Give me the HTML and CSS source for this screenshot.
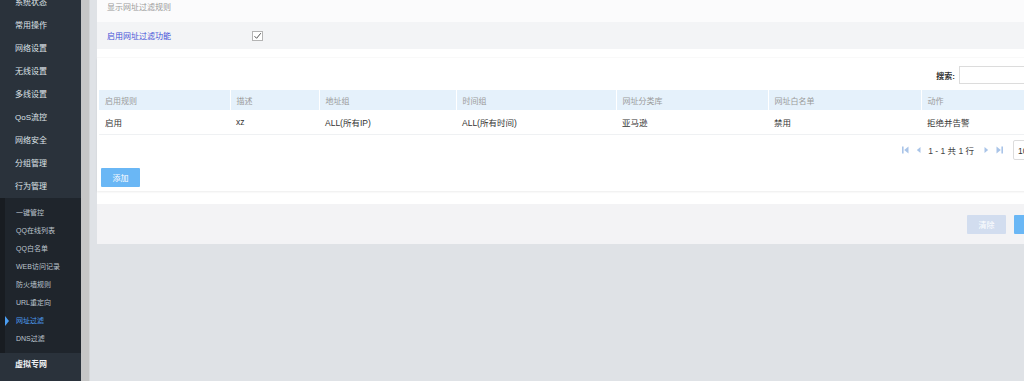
FILE: index.html
```html
<!DOCTYPE html>
<html lang="zh-CN">
<head>
	<meta charset="UTF-8">
	<meta name="viewport" content="width=device-width, initial-scale=1.0">
	<title>网址过滤</title>
	<link rel="stylesheet" href="styles.css">
</head>
<body>
<div class="layout">
	<aside class="sidebar">
		<ul class="menu menu-top">
			<li>系统状态</li>
			<li>常用操作</li>
			<li>网络设置</li>
			<li>无线设置</li>
			<li>多线设置</li>
			<li>QoS流控</li>
			<li>网络安全</li>
			<li>分组管理</li>
			<li>行为管理</li>
		</ul>
		<ul class="submenu">
			<li>一键管控</li>
			<li>QQ在线列表</li>
			<li>QQ白名单</li>
			<li>WEB访问记录</li>
			<li>防火墙规则</li>
			<li>URL重定向</li>
			<li class="active">网址过滤</li>
			<li>DNS过滤</li>
		</ul>
		<ul class="menu">
			<li class="strong">虚拟专网</li>
		</ul>
	</aside>
	<div class="scrollbar"></div>
	<main class="page">
		<div class="panel">
			<div class="panel-title">显示网址过滤规则</div>
			<div class="switch-row">
				<label class="switch-label">启用网址过滤功能</label>
				<span class="checkbox">
					<svg width="9" height="8" viewBox="0 0 9 8"><path d="M1.5 4.2 L3.6 6.3 L7.8 1.2" fill="none" stroke="#555" stroke-width="1"/></svg>
				</span>
			</div>
			<div class="panel-body">
				<div class="card">
					<div class="search-bar">
						<span class="search-label">搜索:</span>
						<input class="search-input" type="text">
					</div>
					<table class="grid">
						<colgroup>
							<col style="width:131px">
							<col style="width:89px">
							<col style="width:137px">
							<col style="width:160px">
							<col style="width:152px">
							<col style="width:153px">
							<col>
						</colgroup>
						<thead>
							<tr>
								<th>启用规则</th>
								<th>描述</th>
								<th>地址组</th>
								<th>时间组</th>
								<th>网址分类库</th>
								<th>网址白名单</th>
								<th>动作</th>
							</tr>
						</thead>
						<tbody>
							<tr>
								<td>启用</td>
								<td>xz</td>
								<td>ALL(所有IP)</td>
								<td>ALL(所有时间)</td>
								<td>亚马逊</td>
								<td>禁用</td>
								<td>拒绝并告警</td>
							</tr>
						</tbody>
					</table>
					<div class="pager">
						<svg class="pager-icon" width="7" height="8" viewBox="0 0 7 8"><rect x="0" y="0.5" width="1.6" height="7" fill="#a9c4e8"/><path d="M6.5 0.5 L2.2 4 L6.5 7.5 Z" fill="#a9c4e8"/></svg>
						<svg class="pager-icon" width="5" height="8" viewBox="0 0 5 8"><path d="M4.5 1 L0.8 4 L4.5 7 Z" fill="#a9c4e8"/></svg>
						<span class="pager-text">1 - 1 共 1 行</span>
						<svg class="pager-icon" width="5" height="8" viewBox="0 0 5 8"><path d="M0.5 1 L4.2 4 L0.5 7 Z" fill="#a9c4e8"/></svg>
						<svg class="pager-icon" width="7" height="8" viewBox="0 0 7 8"><path d="M0.5 0.5 L4.8 4 L0.5 7.5 Z" fill="#a9c4e8"/><rect x="5.4" y="0.5" width="1.6" height="7" fill="#a9c4e8"/></svg>
						<span class="page-size">10</span>
					</div>
					<div class="card-actions">
						<button class="btn btn-primary">添加</button>
					</div>
				</div>
			</div>
			<div class="panel-footer">
				<button class="btn btn-disabled">清除</button>
				<button class="btn btn-primary">保存</button>
			</div>
		</div>
	</main>
</div>
</body>
</html>
```

FILE: styles.css
```css
html, body {
	margin: 0;
	padding: 0;
}
body {
	width: 1024px;
	height: 381px;
	overflow: hidden;
	font-family: "Liberation Sans", "Noto Sans CJK SC", sans-serif;
	font-size: 8px;
	color: #333;
}
.layout {
	display: flex;
	height: 381px;
}

/* sidebar */
.sidebar {
	width: 81px;
	flex: none;
	background: #2a323b;
	overflow: hidden;
}
.sidebar ul {
	list-style: none;
	margin: 0;
	padding: 0;
}
.menu-top {
	margin-top: -9px !important;
}
.menu > li {
	height: 23px;
	line-height: 23px;
	padding-left: 15px;
	color: #dde2e7;
	font-size: 8px;
}
.menu > li.strong {
	color: #f2f4f6;
	font-weight: bold;
}
.submenu {
	background: #1f252c;
	border-left: 5px solid #181c21;
	padding: 6px 0 5px !important;
}
.submenu > li {
	height: 18px;
	line-height: 18px;
	padding-left: 11px;
	color: #bcc4cc;
	font-size: 7px;
	position: relative;
}
.submenu > li.active {
	color: #4c9ef2;
}
.submenu > li.active::before {
	content: "";
	position: absolute;
	left: 0;
	top: 4px;
	border-left: 4px solid #4c9ef2;
	border-top: 5px solid transparent;
	border-bottom: 5px solid transparent;
}
.scrollbar {
	width: 8px;
	flex: none;
	background: #c6c6c6;
	border-right: 1px solid #d4d6d8;
}

/* page */
.page {
	flex: 1;
	background: #dfe2e6;
	padding-left: 7px;
	overflow: hidden;
}
.panel {
	width: 970px;
	background: #fff;
}
.panel-title {
	height: 22px;
	line-height: 16px;
	padding-left: 10px;
	color: #999;
	background: #fbfbfc;
}
.switch-row {
	height: 27px;
	display: flex;
	align-items: center;
	padding-left: 10px;
	background: #f3f4f6;
}
.switch-label {
	color: #3f4fd6;
	width: 145px;
}
.checkbox {
	width: 9px;
	height: 8px;
	border: 1px solid #b4b4b4;
	background: #fff;
	display: flex;
	align-items: center;
	justify-content: center;
	margin-top: 1px;
}
.panel-body {
	padding: 9px 0 13px;
	background: #fff;
}
.card {
	padding: 8px 0 4px 2px;
	background: #fff;
	box-shadow: 0 -1px 1px rgba(0, 0, 0, 0.02), 0 1px 2px rgba(0, 0, 0, 0.08);
}
.search-bar {
	display: flex;
	justify-content: flex-end;
	align-items: center;
	padding-right: 8px;
	height: 18px;
}
.search-label {
	color: #333;
	font-weight: bold;
	margin-right: 4px;
}
.search-input {
	width: 100px;
	height: 18px;
	box-sizing: border-box;
	border: 1px solid #dcdcdc;
	padding: 0;
	margin: 0;
}

/* table */
.grid {
	width: 966px;
	margin-top: 6px;
	border-collapse: collapse;
	table-layout: fixed;
}
.grid th {
	height: 20px;
	padding: 0 0 0 6px;
	background: #e5f1fb;
	color: #9a9a9a;
	font-weight: normal;
	text-align: left;
	border-right: 1px solid #fff;
}
.grid td {
	height: 24px;
	padding: 0 0 0 6px;
	border-bottom: 1px solid #eff1f3;
	color: #333;
	font-size: 8.5px;
}
.pager {
	display: flex;
	justify-content: flex-end;
	align-items: center;
	height: 20px;
	margin-top: 5px;
	padding-right: 14px;
}
.pager-icon {
	margin-left: 7px;
}
.pager-text {
	margin: 0 3px 0 7px;
	font-size: 8.5px;
	color: #444;
}
.page-size {
	width: 40px;
	height: 20px;
	line-height: 20px;
	box-sizing: border-box;
	border: 1px solid #dcdcdc;
	border-radius: 2px;
	padding-left: 4px;
	margin-left: 10px;
	font-size: 8.5px;
}
.card-actions {
	padding: 8px 0 0 2px;
}

/* buttons */
.btn {
	width: 39px;
	height: 19px;
	border: 0;
	border-radius: 1px;
	padding: 0;
	color: #fff;
	font-family: inherit;
	font-size: 8px;
}
.btn-primary {
	background: #6ab7f5;
}
.btn-disabled {
	background: #d2ddef;
}
.panel-footer {
	height: 40px;
	box-sizing: border-box;
	padding: 11px 14px 0 0;
	background: #f3f3f5;
	display: flex;
	justify-content: flex-end;
	align-items: flex-start;
	gap: 8px;
}
```
